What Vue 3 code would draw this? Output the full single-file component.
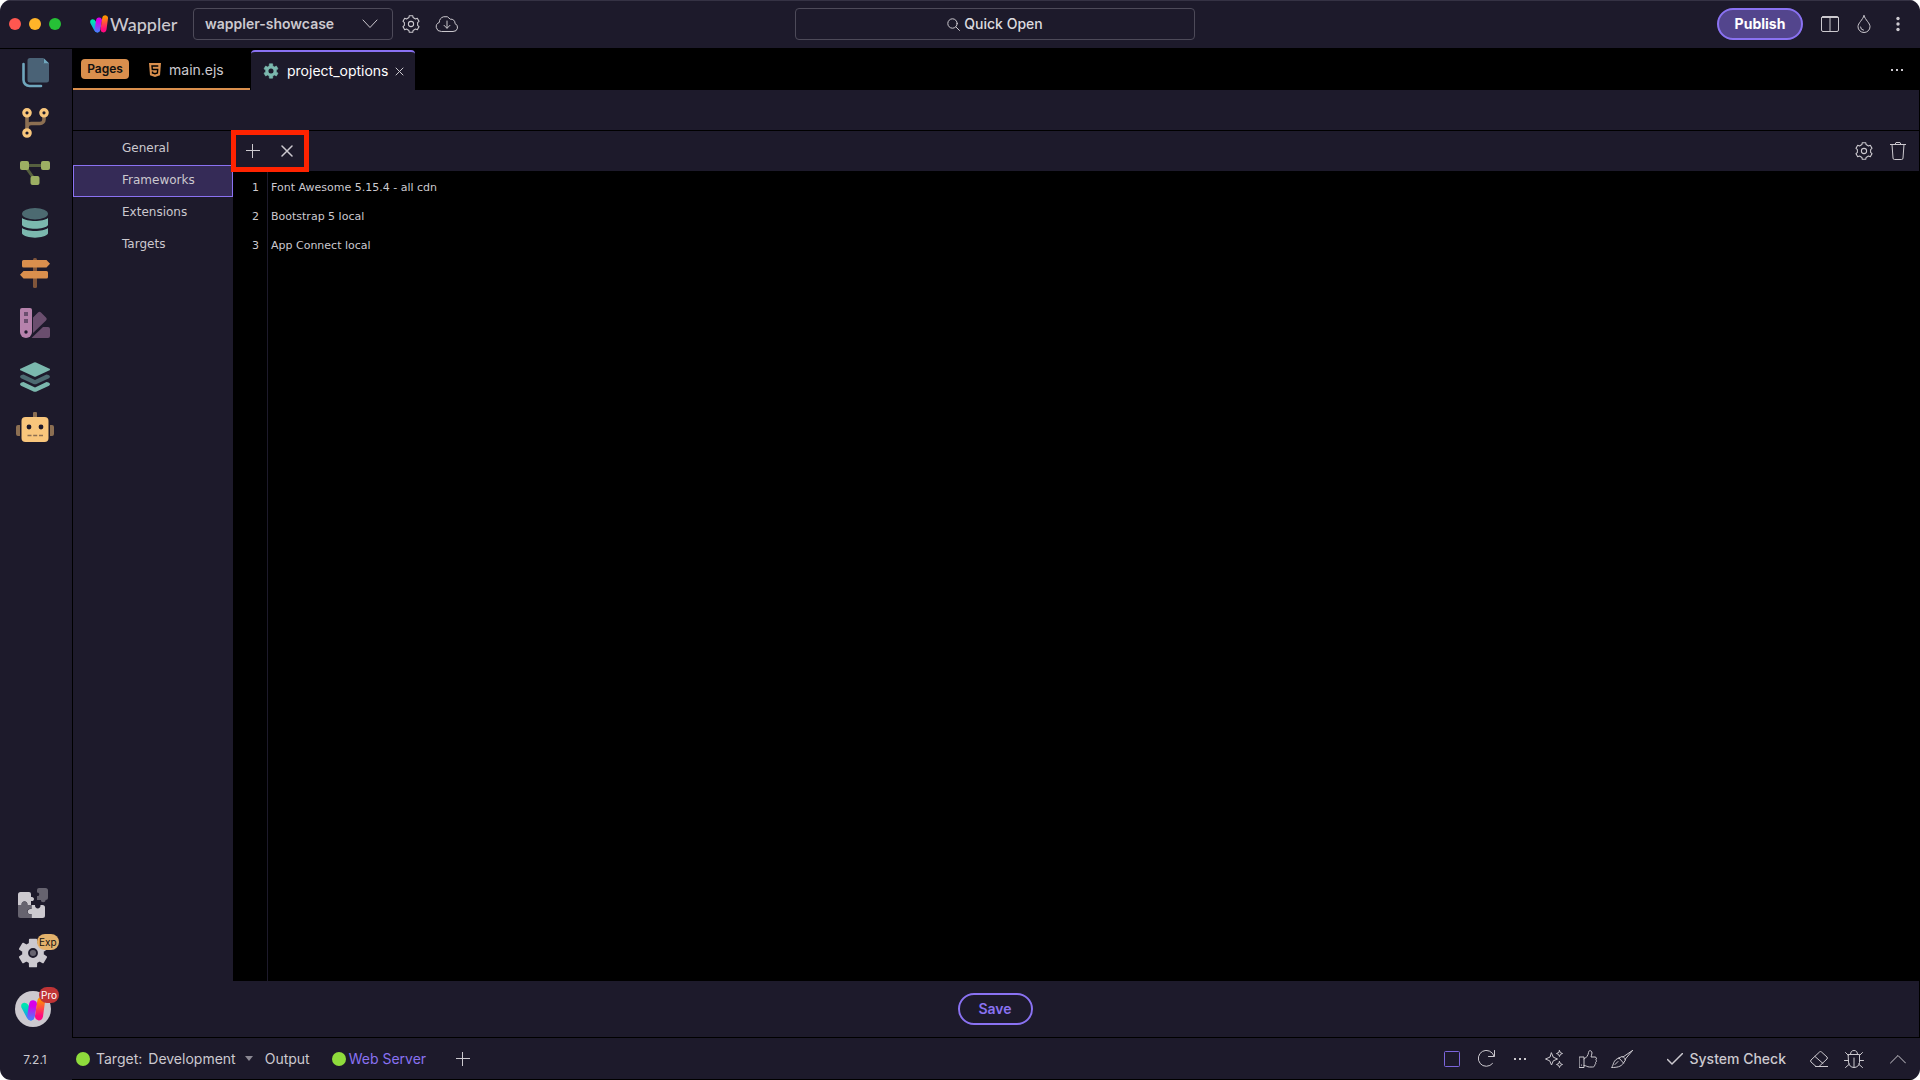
<script setup>
import { ref } from 'vue'

const project = ref('wappler-showcase')
const section = ref('Frameworks')
const sections = ['General', 'Frameworks', 'Extensions', 'Targets']
const frameworks = ['Font Awesome 5.15.4 - all cdn', 'Bootstrap 5 local', 'App Connect local']

// six-tooth gear outline in a 24x24 box
const gear = (outer, inner, half) => {
  const points = []
  for (let i = 0; i < 6; i++) {
    for (const [angle, radius] of [[-half - 6, inner], [-half, outer], [half, outer], [half + 6, inner]]) {
      const a = ((i * 60 + angle - 90) * Math.PI) / 180
      points.push((12 + radius * Math.cos(a)).toFixed(1) + ' ' + (12 + radius * Math.sin(a)).toFixed(1))
    }
  }
  return 'M' + points.join('L') + 'Z'
}
const gearLine = gear(11.3, 9, 12)
const gearSolid = gear(11, 8, 13)
</script>

<template>
  <div class="app">
    <svg class="defs" width="0" height="0" aria-hidden="true">
      <defs>
        <linearGradient id="teal" x1="0" y1="0" x2="0" y2="1">
          <stop offset="0.15" stop-color="#00e5b0" />
          <stop offset="1" stop-color="#1b8cff" />
        </linearGradient>
        <linearGradient id="violet" x1="0" y1="0" x2="0" y2="1">
          <stop offset="0.3" stop-color="#d800e8" />
          <stop offset="1" stop-color="#3f86ff" />
        </linearGradient>
        <linearGradient id="orange" x1="0" y1="0" x2="0" y2="1">
          <stop offset="0.1" stop-color="#ff9300" />
          <stop offset="0.8" stop-color="#ff0a80" />
        </linearGradient>
        <symbol id="mark" viewBox="0 0 24 24">
          <path d="M.4 10.500Q-.6 6.400 3 5.700Q6.200 5.400 7.500 8.200L13 18.500Q13.600 23.200 10 23.400Q7 23.300 5.700 20.500Z" fill="url(#teal)" />
          <path d="M8 7.500Q8.600 3 12.300 3.200Q16.200 3.800 16 7.500L13.800 19.400Q12.800 23.500 9.600 23.400Q6 22.600 6.200 19Z" fill="url(#violet)" />
          <path d="M16.200 4.500Q16.800 .2 20.500 .3Q24.400 .9 24 4.800L22 19.400Q21.200 23.400 17.700 23.400Q13.800 22.600 14 19Z" fill="url(#orange)" />
        </symbol>
      </defs>
    </svg>

    <header class="header">
      <div class="header-start">
        <div class="lights"><i class="red"></i><i class="amber"></i><i class="green"></i></div>
        <div class="brand"><svg width="18" height="18"><use href="#mark" /></svg><span>Wappler</span></div>
        <div class="project">
          <select v-model="project" aria-label="Project">
            <option>wappler-showcase</option>
          </select>
          <svg width="16" height="10" viewBox="0 0 16 10" class="line"><path d="M1 1l7 7.500l7-7.500" /></svg>
        </div>
        <button class="icon" aria-label="Project settings">
          <svg width="18" height="18" viewBox="0 0 24 24" class="line gear"><path :d="gearLine" /><circle cx="12" cy="12" r="3.500" /></svg>
        </button>
        <button class="icon" aria-label="Download">
          <svg width="24" height="18" viewBox="0 0 24 18" class="line">
            <path d="M6 16.500a4.700 4.700 0 0 1-1.700-9.100A6 6 0 0 1 15.300 4.200A4 4 0 0 1 20 8.600a4.100 4.100 0 0 1-1.600 7.900zM12 6v7M9 10.300l3 3l3-3" />
          </svg>
        </button>
      </div>
      <button class="quick">
        <svg width="13" height="13" viewBox="0 0 13 13" class="line"><circle cx="5.500" cy="5.500" r="4.700" /><path d="M9 9l3.500 3.500" /></svg>
        Quick Open
      </button>
      <div class="header-end">
        <button class="publish">Publish</button>
        <button class="icon" aria-label="Layout">
          <svg width="18" height="16" viewBox="0 0 18 16" class="line"><rect x="0.500" y="0.500" width="17" height="15" rx="1.500" /><path d="M9 1v14M1 1.500h16" /></svg>
        </button>
        <button class="icon" aria-label="Theme">
          <svg width="14" height="18" viewBox="0 0 14 18" class="line"><path d="M7 .7C5.700 5 1 8 1 11.700a6 5.800 0 0 0 12 0C13 8 8.300 5 7 .7zM3.500 12a3.400 3.400 0 0 0 3 3.200" /></svg>
        </button>
        <button class="icon" aria-label="More">
          <svg width="4" height="16" viewBox="0 0 4 16" fill="#ccc9cf"><circle cx="2" cy="2.500" r="1.700" /><circle cx="2" cy="8" r="1.700" /><circle cx="2" cy="13.500" r="1.700" /></svg>
        </button>
      </div>
    </header>

    <aside class="sidebar">
      <nav class="tools" aria-label="Managers">
        <button aria-label="Pages">
          <svg width="30" height="30" viewBox="0 0 30 30">
            <path d="M3.500 6v16a6 6 0 0 0 6 6H21" fill="none" stroke="#6fa6bd" stroke-width="2.600" stroke-linecap="round" />
            <path d="M10 0h13v5h6v17a2.500 2.500 0 0 1-2.500 2.500H10A2.500 2.500 0 0 1 7.500 22V2.500A2.500 2.500 0 0 1 10 0z" fill="#4a6276" />
            <path d="M23.500 0L29 5.300h-5.500z" fill="#6fa6bd" />
          </svg>
        </button>
        <button aria-label="Git">
          <svg width="30" height="30" viewBox="0 0 30 30" fill="none">
            <path d="M7 8v14M24 8v3.500a4 4 0 0 1-4 4h-9a4 4 0 0 0-4 4" stroke="#8c6f52" stroke-width="3.600" />
            <g stroke="#f8c67c" stroke-width="3.200"><circle cx="7" cy="4.800" r="3.200" /><circle cx="24" cy="4.800" r="3.200" /><circle cx="7" cy="25" r="3.200" /></g>
          </svg>
        </button>
        <button aria-label="Workflows">
          <svg width="30" height="30" viewBox="0 0 30 30">
            <path d="M4 7.500h22M5 8l10 14" stroke="#56603f" stroke-width="3" />
            <g fill="#9caf63"><rect y="3" width="9" height="9" rx="2" /><rect x="21" y="3" width="9" height="9" rx="2" /><rect x="10.500" y="18" width="9" height="9" rx="2" /></g>
          </svg>
        </button>
        <button aria-label="Database">
          <svg width="30" height="30" viewBox="0 0 30 30">
            <ellipse cx="15" cy="5.700" rx="13" ry="5.700" fill="#4c6a71" />
            <path d="M2 10c5 4 21 4 26 0v7c-3 5-23 5-26 0zM2 20c5 4 21 4 26 0v5.500c-3 5.500-23 5.500-26 0z" fill="#7bb8ae" />
          </svg>
        </button>
        <button aria-label="Routes">
          <svg width="30" height="30" viewBox="0 0 30 30">
            <rect x="13" width="4" height="30" rx="1.500" fill="#80553a" />
            <path d="M3.500 2H26.500L30 5.700L26.500 9.500H3.500A1.500 1.500 0 0 1 2 8V3.500A1.500 1.500 0 0 1 3.500 2zM3.500 13H26.500A1.500 1.500 0 0 1 28 14.500V19A1.500 1.500 0 0 1 26.500 20.500H3.500L0 16.800z" fill="#da8f4d" />
          </svg>
        </button>
        <button aria-label="Themes">
          <svg width="30" height="30" viewBox="0 0 30 30">
            <path d="M13 9.500L18 4.500a2 2 0 0 1 3 0L26 9.500a2 2 0 0 1 0 3L13 25zM11.500 30L23 19h5a2 2 0 0 1 2 2v7a2 2 0 0 1-2 2z" fill="#6a4e6e" />
            <path d="M2 0h8a2 2 0 0 1 2 2v22a6 6 0 0 1-12 0V2a2 2 0 0 1 2-2z" fill="#b682ac" />
            <path d="M4 4h4v4H4zM4 11h4v4H4z" fill="#6a4e6e" /><circle cx="6" cy="24" r="1.700" fill="#1d1a2b" />
          </svg>
        </button>
        <button class="gap" aria-label="Components">
          <svg width="30" height="30" viewBox="0 0 30 30">
            <path d="M0 22.500Q0 21 1.500 20.600L3.500 20L15 25.500L26.500 20L28.500 20.600Q30 21 30 22.500L29 23.800L16 29.700Q15 30 14 29.700L1 23.800z" fill="#7bb8ae" />
            <path d="M0 15Q0 13.500 1.500 13L3.500 12.500L15 18L26.500 12.500L28.500 13Q30 13.500 30 15L29 16.300L16 22.200Q15 22.500 14 22.200L1 16.300z" fill="#4c6a71" />
            <path d="M1 6.500L14 .5a2.500 2.500 0 0 1 2 0l13 6a1 1 0 0 1 0 2l-13 6a2.500 2.500 0 0 1-2 0l-13-6a1 1 0 0 1 0-2z" fill="#7bb8ae" />
          </svg>
        </button>
        <button aria-label="AI assistant">
          <svg width="38" height="30" viewBox="0 0 38 30">
            <path d="M17 7V1.500a2 2 0 0 1 4 0V7zM4 13v11H2a2 2 0 0 1-2-2v-7a2 2 0 0 1 2-2zM34 13v11h2a2 2 0 0 0 2-2v-7a2 2 0 0 0-2-2z" fill="#8c6f52" />
            <rect x="5.500" y="5" width="27" height="25" rx="4" fill="#f8c67c" />
            <circle cx="13" cy="15" r="2.400" fill="#1d1a2b" /><circle cx="25" cy="15" r="2.400" fill="#1d1a2b" />
            <path d="M11.500 23.500h4M17.200 23.500h4M23 23.500h4" stroke="#8c6f52" stroke-width="1.700" />
          </svg>
        </button>
      </nav>
      <nav class="tools low" aria-label="Application">
        <button aria-label="Extensions">
          <svg width="30" height="30" viewBox="0 0 30 30">
            <path d="M0 17h4c-.8-2 .6-3.500 2.500-3.500S9.700 15 9 17h4v4c-2-.8-3.600.5-3.600 2.500S11 26.600 13 26v4H2.500A2.500 2.500 0 0 1 0 27.500zM21 0h6.500A2.500 2.500 0 0 1 30 2.500V9.500a2.500 2.500 0 0 1-2.500 2.500c.3 3-5 3-4.500 0h-4V8c3 .8 3-4 0-3.500V2a2 2 0 0 1 2-2z" fill="#66636f" />
            <path d="M2.500 4H11a2 2 0 0 1 2 2v3c4-1 4 5 0 4v4H9.500c.5-5-6.500-5-6 0H0V6.500A2.500 2.500 0 0 1 2.500 4zM13.500 17H17c-.5 4.500 6 4.500 5.500 0h2A2.500 2.500 0 0 1 27 19.500v8A2.500 2.500 0 0 1 24.500 30h-11v-4c-5 1-5-6 0-5z" fill="#ccc9cf" />
          </svg>
        </button>
        <button aria-label="Settings">
          <svg width="30" height="30" viewBox="0 0 24 24">
            <path :d="gearSolid" fill="#ccc9cf" stroke="#ccc9cf" stroke-width="1.500" stroke-linejoin="round" />
            <circle cx="12" cy="12" r="3.200" fill="#66636f" stroke="#1d1a2b" stroke-width="1.500" />
          </svg>
          <span class="badge exp">Exp</span>
        </button>
        <button class="account" aria-label="Account">
          <span class="avatar"><svg width="24" height="24"><use href="#mark" /></svg></span>
          <span class="badge pro">Pro</span>
        </button>
      </nav>
    </aside>

    <main class="main">
      <div class="tabs">
        <div class="group">
          <span class="pages">Pages</span>
          <button class="tab">
            <svg width="12" height="14" viewBox="0 0 12 14"><path d="M0 0h12l-1 12.300L6 14l-5-1.700z" fill="#da8f4d" /><path d="M9.300 3H3l.3 3.500H8.700L8.400 10L6 10.700L3.500 10V8.500" fill="none" stroke="#000" stroke-width="1.400" /></svg>
            <span>main.ejs</span>
          </button>
        </div>
        <div class="tab active">
          <svg width="16" height="16" viewBox="0 0 24 24"><path :d="gearSolid" fill="#7bb8ae" stroke="#7bb8ae" stroke-linejoin="round" /><circle cx="12" cy="12" r="3.800" fill="#1d1a2b" /></svg>
          <span>project_options</span>
          <button class="icon" aria-label="Close tab"><svg width="9" height="9" viewBox="0 0 9 9" class="line"><path d="M1 1l7 7M8 1L1 8" /></svg></button>
        </div>
        <button class="icon tabs-more" aria-label="More tabs"><svg width="12" height="4" viewBox="0 0 12 4" fill="#ccc9cf"><path d="M0 1h2v2H0zM5 1h2v2H5zM10 1h2v2h-2z" /></svg></button>
      </div>
      <div class="strip"></div>

      <div class="options">
        <nav class="sections" aria-label="Project options">
          <button v-for="name in sections" :key="name" :class="{ selected: name === section }" @click="section = name">{{ name }}</button>
        </nav>
        <section class="panel">
          <div class="toolbar">
            <div class="edit">
              <button class="icon" aria-label="Add"><svg width="14" height="14" viewBox="0 0 14 14" class="line"><path d="M6.500 0v14M0 6.500h14" /></svg></button>
              <button class="icon" aria-label="Remove"><svg width="12" height="12" viewBox="0 0 12 12" class="line bold"><path d="M1 1l10 10M11 1L1 11" /></svg></button>
            </div>
            <button class="icon" aria-label="Options"><svg width="18" height="18" viewBox="0 0 24 24" class="line gear"><path :d="gearLine" /><circle cx="12" cy="12" r="3.500" /></svg></button>
            <button class="icon" aria-label="Delete">
              <svg width="16" height="18" viewBox="0 0 16 18" class="line"><path d="M0 2.500h16M5 2.500l1-2h4l1 2M2 2.500l1 13.500a1.500 1.500 0 0 0 1.500 1.500h7a1.500 1.500 0 0 0 1.500-1.500l1-13.500" /></svg>
            </button>
          </div>
          <ol class="list">
            <li v-for="(name, i) in frameworks" :key="name"><span class="number">{{ i + 1 }}</span><span>{{ name }}</span></li>
          </ol>
        </section>
      </div>
      <div class="actions"><button class="save">Save</button></div>
    </main>

    <footer class="footer">
      <span class="version">7.2.1</span>
      <div class="status">
        <button class="target"><i class="dot"></i><span>Target:</span><span>Development</span><i class="caret"></i></button>
        <button class="output">Output</button>
        <button class="server"><i class="dot"></i>Web Server</button>
        <button class="icon" aria-label="Add terminal"><svg width="14" height="14" viewBox="0 0 14 14" class="line"><path d="M6.500 0v14M0 6.500h14" /></svg></button>
        <div class="shortcuts">
          <button class="icon" aria-label="Panel"><svg width="16" height="16" viewBox="0 0 16 16" fill="none" stroke="#7c66dc"><rect x="0.500" y="0.500" width="15" height="15" rx="1" /></svg></button>
          <button class="icon" aria-label="Refresh"><svg width="18" height="18" viewBox="0 0 18 18" class="line"><path d="M15.500 13.500A8 8 0 1 1 17 6M17.500 .5V6.500H11.500" /></svg></button>
          <button class="icon" aria-label="More"><svg width="12" height="4" viewBox="0 0 12 4" fill="#ccc9cf"><path d="M0 1h2v2H0zM5 1h2v2H5zM10 1h2v2h-2z" /></svg></button>
          <button class="icon" aria-label="Magic">
            <svg width="18" height="18" viewBox="0 0 18 18" class="line"><path d="M6.500 3l1.800 4.200L12.500 9L8.300 10.800L6.500 15L4.700 10.800L.5 9L4.700 7.200zM14.500 .5l.9 2.100l2.100.9l-2.100.9l-.9 2.100l-.9-2.100l-2.100-.9l2.100-.9zM14.500 11.500l.9 2.100l2.100.9l-2.100.9l-.9 2.100l-.9-2.100l-2.100-.9l2.100-.9z" /></svg>
          </button>
          <button class="icon" aria-label="Like">
            <svg width="18" height="18" viewBox="0 0 18 18" class="line"><path d="M.5 7h4.500v10.500H.5zM5 9c2-.7 4.500-4 4.500-6.500C9.500 0 13 .1 13 3c0 1.700-1 3-1 4h4c1.600 0 2 2 .8 2.800c1 .7.700 2.200-.3 2.700c.6 1 0 2-.8 2.300c0 1.500-.7 2.200-2.200 2.200h-3C8 17 7.500 15.500 5 15.500M2.500 15v.2" /></svg>
          </button>
          <button class="icon" aria-label="Clean up">
            <svg width="22" height="18" viewBox="0 0 22 18" class="line"><path d="M21.500 .5L12 7M21.500 .5L14 9.500M8 8l3-1.500c2 .5 3.500 2 3.500 3.500L12.500 13C10 17 5.500 17.500 .5 17.500C3 15 1.500 10 8 8zM8 8l4.500 5M4 14.500l3-3" /></svg>
          </button>
        </div>
        <div class="status-end">
          <button class="check"><svg width="16" height="12" viewBox="0 0 16 12" class="line bold"><path d="M.5 6.500l4.500 4.500L15.500 .5" /></svg>System Check</button>
          <button class="icon" aria-label="Clear">
            <svg width="18" height="16" viewBox="0 0 18 16" class="line"><path d="M6 15.500L1 11a1.500 1.500 0 0 1 0-2L9.500 1a1.500 1.500 0 0 1 2 0l5.500 5a1.500 1.500 0 0 1 0 2l-8 7.500M5 5.500l8 7M5.500 15.500H18" /></svg>
          </button>
          <button class="icon" aria-label="Debug">
            <svg width="20" height="18" viewBox="0 0 20 18" class="line"><path d="M4.500 4.500h11v8a5.500 5 0 0 1-11 0zM6.500 4.500a3.500 4 0 0 1 7 0M10 8v9.500M.5 10.500h4M15.500 10.500h4M1.500 2.500l3 3M18.500 2.500l-3 3M1.500 17.500L5.500 14M18.500 17.500L14.500 14" /></svg>
          </button>
          <button class="icon" aria-label="Expand"><svg width="16" height="10" viewBox="0 0 16 10" class="line"><path d="M.5 9L8 1.500L15.500 9" /></svg></button>
        </div>
      </div>
    </footer>
  </div>
</template>

<style>
body { margin: 0; background: #fff; }
</style>

<style scoped>
.app {
  display: grid;
  grid-template-columns: 72px 1fr;
  grid-template-rows: 48px 1fr 42px;
  min-height: 100vh;
  box-sizing: border-box;
  overflow: hidden;
  border-radius: 11px;
  background: #1d1a2b;
  color: #ccc9cf;
  font: 14px/20px Inter, "Liberation Sans", sans-serif;
}
.app * { box-sizing: border-box; }
.defs { position: absolute; }
svg { display: block; flex: none; }
button { font: inherit; color: inherit; background: none; border: 0; padding: 0; margin: 0; cursor: pointer; }
.line { fill: none; stroke: #ccc9cf; stroke-width: 1; stroke-linecap: round; stroke-linejoin: round; }
.line.bold { stroke-width: 1.5; }
.line.gear { stroke-width: 1.4; }
.icon { display: flex; align-items: center; justify-content: center; }

/* the first column mirrors the sidebar so the search box centers over the content */
.header { grid-column: 1 / 3; display: grid; grid-template-columns: 72px 1fr 400px 1fr; align-items: center; padding: 0 2px 1px 0; border-top: 1px solid #353244; }
.header-start { grid-column: 1 / 3; display: grid; grid-template-columns: 90px 103px 200px 36px 36px; align-items: center; }
.lights { display: flex; gap: 8px; padding-left: 9px; }
.lights i { width: 12px; height: 12px; border-radius: 50%; }
.red { background: #ff5750; }
.amber { background: #ffb429; }
.green { background: #26c136; }
.brand { display: flex; align-items: center; gap: 2px; font: 500 18px/20px Lato, sans-serif; }
.project { display: flex; align-items: center; height: 32px; padding-right: 14px; border: 1px solid #4d4a59; border-radius: 4px; }
.project select { flex: 1; height: 30px; padding: 0 0 0 11px; border: 0; background: none; color: inherit; font: 600 14px/20px Inter, sans-serif; appearance: none; }
.quick { display: flex; align-items: center; justify-content: center; gap: 4px; height: 32px; border: 1px solid #4d4a59; border-radius: 4px; font-weight: 500; color: #dcdadf; }
.header-end { display: flex; align-items: center; justify-content: flex-end; gap: 18px; padding-right: 18px; }
.header-end .icon:last-child { padding-left: 7px; }
.publish { width: 86px; height: 32px; border: 2px solid #8a72f2; border-radius: 16px; background: #53458d; color: #fff; font-weight: 700; }

.sidebar { display: flex; flex-direction: column; justify-content: space-between; border-top: 1px solid #000; }
.tools { display: flex; flex-direction: column; }
.tools button { position: relative; display: flex; align-items: center; justify-content: center; height: 50px; padding: 0 2px 2px 0; }
.tools .gap { margin-top: 4px; }
.low button { padding: 0 6px 0 0; }
.low .account { height: 60px; padding: 2px 6px 0 0; }
.avatar { display: flex; align-items: center; justify-content: center; width: 36px; height: 36px; border-radius: 50%; background: #ccc9cf; }
.badge { position: absolute; left: 37px; top: 6px; height: 16px; padding: 0 2px; border-radius: 8px; font-size: 10px; line-height: 16px; }
.exp { background: #e3b26c; color: #111; }
.pro { left: 39px; top: 9px; background: #bf3436; color: #fff; }

.main { display: flex; flex-direction: column; border: solid #000; border-width: 0 1px; }
.tabs { display: flex; height: 42px; background: #000; }
.group { display: flex; align-items: center; width: 177px; padding: 2px 0 0 8px; border-bottom: 2px solid #da8f4d; }
.pages { width: 48px; height: 20px; margin-right: 20px; border-radius: 4px; background: #da8f4d; color: #111; font-size: 12px; font-weight: 600; text-align: center; }
.tab { display: flex; align-items: center; gap: 8px; }
.group .tab { padding-top: 2px; }
.active { height: 40px; margin: 2px 0 0 1px; padding: 0 11px 0 12px; border-top: 2px solid #8a72f2; border-radius: 4px 4px 0 0; background: #1d1a2b; color: #fff; }
.active .icon { margin-left: -2px; }
.tabs-more { margin-left: auto; padding: 2px 16px 0 0; }
.strip { height: 41px; border-bottom: 1px solid #000; }
.options { flex: 1; display: flex; }
.sections { display: flex; flex-direction: column; width: 160px; padding-top: 2px; font: 12px/16px "DejaVu Sans", sans-serif; }
.sections button { height: 32px; padding: 0 0 3px 48px; border: 1px solid transparent; text-align: left; }
.sections .selected { border-color: #8a72f2; background: #352b57; }
.panel { flex: 1; display: flex; flex-direction: column; }
.toolbar { position: relative; display: flex; align-items: center; justify-content: flex-end; gap: 17px; height: 40px; padding-right: 13px; }
.edit { position: absolute; left: -2px; top: -1px; display: flex; align-items: center; gap: 21px; width: 78px; height: 42px; padding-left: 10px; border: 5px solid #ff2300; }
.list { flex: 1; margin: 0; padding: 2px 0 0; list-style: none; background: linear-gradient(90deg, #000 34px, #1d1a2b 34px, #1d1a2b 35px, #000 35px); font: 11px/29px "DejaVu Sans", sans-serif; }
.list li { display: flex; gap: 12px; }
.number { width: 26px; text-align: right; }
.actions { display: flex; align-items: center; justify-content: center; height: 57px; padding-right: 2px; border-bottom: 1px solid #000; }
.save { width: 75px; height: 32px; border: 2px solid #8a72f2; border-radius: 16px; color: #8a72f2; font-weight: 600; }

.footer { grid-column: 1 / 3; display: flex; }
.version { width: 72px; padding-right: 2px; font-size: 12px; line-height: 44px; text-align: center; }
.status { flex: 1; display: flex; align-items: center; padding: 0 14px 0 4px; border-bottom: 1px solid #000; }
.dot { width: 14px; height: 14px; border-radius: 50%; background: #8fdc3c; }
.target { display: flex; align-items: center; gap: 6px; margin-right: 12px; }
.caret { margin-left: 3px; border: solid transparent; border-width: 5px 4px 0; border-top-color: #8b8893; }
.server { display: flex; align-items: center; gap: 3px; margin: 0 30px 0 22px; color: #8a72f2; }
.shortcuts { display: flex; margin-left: auto; }
.shortcuts .icon { width: 34px; }
.status-end { display: flex; align-items: center; gap: 16px; margin-left: 28px; }
.check { display: flex; align-items: center; gap: 7px; margin-right: 8px; font-weight: 500; }
.status-end .icon:last-child { padding-left: 10px; }
</style>
